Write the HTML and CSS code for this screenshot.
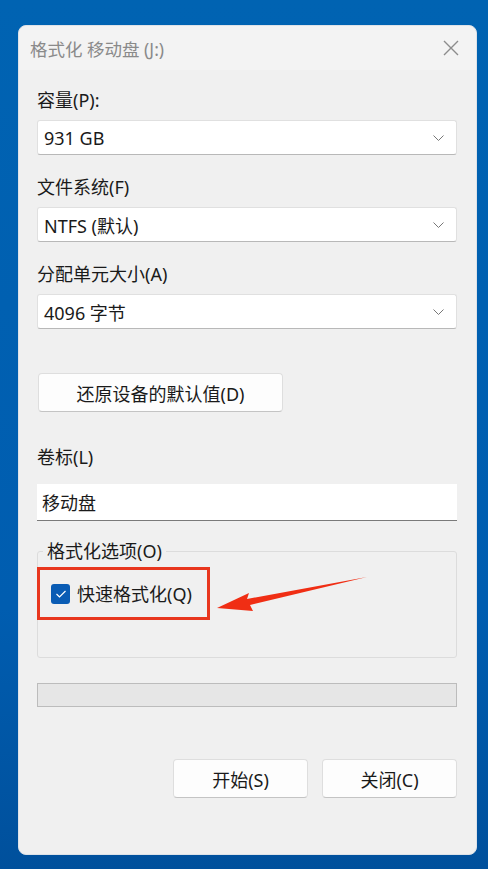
FILE: index.html
```html
<!DOCTYPE html>
<html lang="zh-CN">
<head>
<meta charset="utf-8">
<link rel="stylesheet" href="styles.css">
</head>
<body>
<div class="dialog">
  <div class="titlebar">
    <span class="title">格式化 移动盘 (J:)</span>
    <svg class="close" width="16" height="16" viewBox="0 0 16 16"><path d="M1 1L15 15M15 1L1 15" stroke="#8c8c8c" stroke-width="1.4" fill="none"/></svg>
  </div>
  <div class="content">
    <div class="label first">容量(P):</div>
    <div class="select"><span>931 GB</span><svg class="chev" width="11" height="6" viewBox="0 0 11 6"><path d="M0.5 0.5L5.5 5.5L10.5 0.5" stroke="#777" stroke-width="1" fill="none"/></svg></div>
    <div class="label">文件系统(F)</div>
    <div class="select"><span>NTFS (默认)</span><svg class="chev" width="11" height="6" viewBox="0 0 11 6"><path d="M0.5 0.5L5.5 5.5L10.5 0.5" stroke="#777" stroke-width="1" fill="none"/></svg></div>
    <div class="label">分配单元大小(A)</div>
    <div class="select"><span>4096 字节</span><svg class="chev" width="11" height="6" viewBox="0 0 11 6"><path d="M0.5 0.5L5.5 5.5L10.5 0.5" stroke="#777" stroke-width="1" fill="none"/></svg></div>
    <div class="btn restore">还原设备的默认值(D)</div>
    <div class="label vol">卷标(L)</div>
    <div class="input">移动盘</div>
    <fieldset class="group">
      <legend>格式化选项(O)</legend>
      <div class="check-row">
        <span class="checkbox"><svg width="12" height="10" viewBox="0 0 12 10"><path d="M1.5 5L4.5 8L10.5 2" stroke="#fff" stroke-width="1.2" fill="none"/></svg></span>
        <span class="check-label">快速格式化(Q)</span>
      </div>
      <div class="highlight"></div>
    </fieldset>
    <div class="progress"></div>
    <div class="buttons">
      <div class="btn">开始(S)</div>
      <div class="btn">关闭(C)</div>
    </div>
  </div>
  <svg class="arrow" width="160" height="40" viewBox="0 0 160 40"><path d="M150 2 L30 24 L32 18 L0 33 L36 36 L33 30 Z" fill="#f02e14"/></svg>
</div>
</body>
</html>
```
FILE: styles.css
```css
html, body {
  margin: 0;
  padding: 0;
}
body {
  width: 488px;
  height: 869px;
  background: linear-gradient(180deg, #0063b2 0%, #005db0 70%, #00509c 100%);
  font-family: "Noto Sans", "Noto Sans CJK SC", sans-serif;
  color: #1a1a1a;
  overflow: hidden;
}
.dialog {
  position: relative;
  margin: 25px 0 0 18px;
  width: 459px;
  height: 830px;
  background: #f0f0f0;
  border-radius: 8px;
  box-sizing: border-box;
  border: 1px solid #dde2e8;
}
.titlebar {
  height: 44px;
  display: flex;
  align-items: center;
  justify-content: space-between;
  padding: 0 17px 0 11px;
  background: #f3f3f3;
  border-radius: 8px 8px 0 0;
}
.title {
  font-size: 17.5px;
  color: #8a8a8a;
}
.close {
  display: block;
}
.content {
  padding: 0 19px 0 18px;
  display: flex;
  flex-direction: column;
}
.label {
  font-size: 18px;
  line-height: 22px;
  margin-top: 21px;
  margin-bottom: 9px;
}
.label.first {
  margin-top: 19px;
}
.label.vol {
  margin-top: 34px;
  margin-bottom: 16px;
}
.select {
  height: 35px;
  box-sizing: border-box;
  background: #fff;
  border: 1px solid #e0e0e0;
  border-bottom-color: #b8b8b8;
  border-radius: 3px;
  display: flex;
  align-items: center;
  justify-content: space-between;
  padding: 0 12px 0 6px;
  font-size: 18px;
}
.chev {
  display: block;
}
.btn {
  height: 39px;
  box-sizing: border-box;
  background: #fdfdfd;
  border: 1px solid #dedede;
  border-bottom-color: #c4c4c4;
  border-radius: 4px;
  display: flex;
  align-items: center;
  justify-content: center;
  font-size: 18px;
}
.btn.restore {
  margin-top: 44px;
  margin-left: 1px;
  width: 245px;
}
.input {
  height: 37px;
  box-sizing: border-box;
  background: #fff;
  border-bottom: 1px solid #7a7a7a;
  display: flex;
  align-items: center;
  padding-left: 5px;
  font-size: 18px;
}
.group {
  position: relative;
  margin: 19px 0 0 0;
  padding: 0;
  height: 118px;
  box-sizing: border-box;
  border: 1px solid #dcdcdc;
  border-radius: 3px;
}
.group legend {
  margin-left: 5px;
  padding: 0 4px;
  font-size: 18px;
  line-height: 22px;
  color: #1a1a1a;
}
.check-row {
  display: flex;
  align-items: center;
  margin: 21px 0 0 13px;
  gap: 7px;
}
.checkbox {
  width: 19px;
  height: 20px;
  background: #0a5cb4;
  border-radius: 3px;
  display: flex;
  align-items: center;
  justify-content: center;
}
.check-label {
  font-size: 18px;
  line-height: 22px;
}
.highlight {
  position: absolute;
  left: -1px;
  top: 5px;
  width: 173px;
  height: 53px;
  box-sizing: border-box;
  border: 3px solid #e8361e;
}
.progress {
  margin-top: 25px;
  height: 24px;
  box-sizing: border-box;
  background: #e6e6e6;
  border: 1px solid #bcbcbc;
}
.buttons {
  margin-top: 52px;
  display: flex;
  justify-content: flex-end;
  gap: 14px;
}
.buttons .btn {
  width: 135px;
}
.arrow {
  position: absolute;
  left: 198px;
  top: 549px;
}
```
